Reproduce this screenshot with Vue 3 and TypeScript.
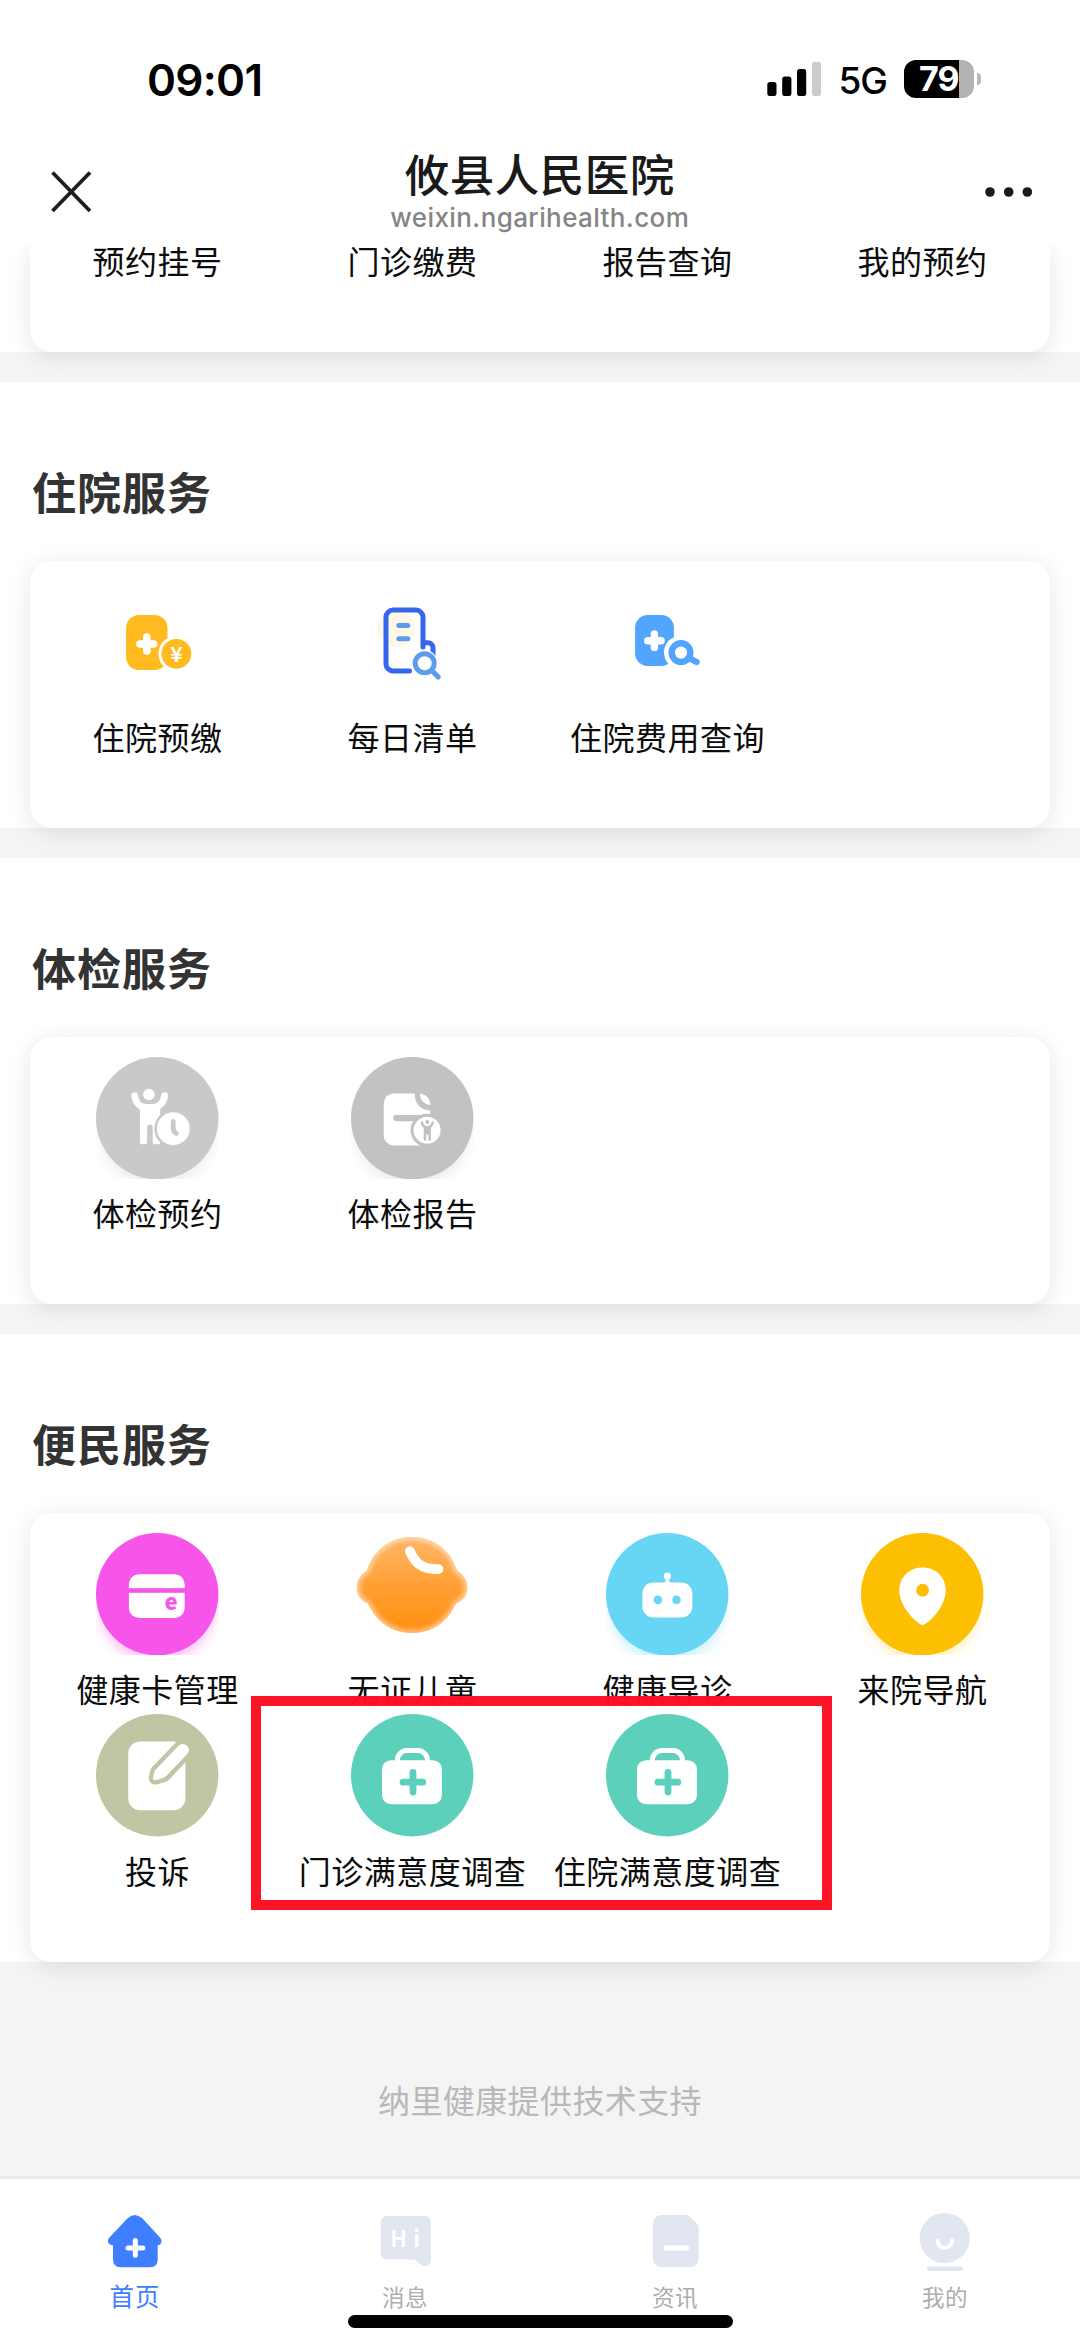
<script setup lang="ts">
interface Service {
  label: string
  icon: string
  disc?: string
  glow?: string
}
interface Section {
  title: string
  items: Service[]
}
interface Tab {
  label: string
  icon: string
  active?: boolean
}

const topLinks: string[] = ['预约挂号', '门诊缴费', '报告查询', '我的预约']

const sections: Section[] = [
  {
    title: '住院服务',
    items: [
      { label: '住院预缴', icon: 'prepay' },
      { label: '每日清单', icon: 'daily' },
      { label: '住院费用查询', icon: 'fee' },
    ],
  },
  {
    title: '体检服务',
    items: [
      { label: '体检预约', icon: 'exam', disc: '#c9c9c9', glow: '#eeeeee' },
      { label: '体检报告', icon: 'report', disc: '#c2c2c2', glow: '#eeeeee' },
    ],
  },
  {
    title: '便民服务',
    items: [
      { label: '健康卡管理', icon: 'card', disc: '#f755ea', glow: '#fbc4f6' },
      { label: '无证儿童', icon: 'child' },
      { label: '健康导诊', icon: 'robot', disc: '#67d6f5', glow: '#cdf2fd' },
      { label: '来院导航', icon: 'pin', disc: '#fdbf02', glow: '#fff1c2' },
      { label: '投诉', icon: 'complain', disc: '#bfc6a3' },
      { label: '门诊满意度调查', icon: 'kit', disc: '#5dd0bc' },
      { label: '住院满意度调查', icon: 'kit', disc: '#5dd0bc' },
    ],
  },
]

const tabs: Tab[] = [
  { label: '首页', icon: 'home', active: true },
  { label: '消息', icon: 'message' },
  { label: '资讯', icon: 'news' },
  { label: '我的', icon: 'mine' },
]
</script>

<template>
  <div class="screen">
    <header class="header">
      <div class="status">
        <span class="time">09:01</span>
        <div class="status-right">
          <svg class="signal" width="54" height="36" viewBox="0 0 54 36">
            <rect x="0.3" y="21" width="9.2" height="14" rx="2.8" />
            <rect x="15.2" y="15.5" width="9.2" height="19.5" rx="2.8" />
            <rect x="30" y="8" width="9.2" height="27" rx="2.8" />
            <rect x="45" y="0.7" width="9" height="34.3" rx="2.8" fill="#cccccc" />
          </svg>
          <span class="network">5G</span>
          <div class="battery"><span>79</span></div>
          <i class="battery-tip"></i>
        </div>
      </div>
      <div class="nav">
        <svg class="close" width="44" height="44" viewBox="0 0 44 44">
          <path d="M3.500 2.500 41 41M41 2.500 3.500 41" stroke="#1e1e1e" stroke-width="3.800" />
        </svg>
        <div class="titles">
          <h1>攸县人民医院</h1>
          <p>weixin.ngarihealth.com</p>
        </div>
        <svg class="more" width="48" height="12" viewBox="0 0 48 12">
          <circle cx="5" cy="6" r="4.8" fill="#1a1a1a" />
          <circle cx="23.7" cy="6" r="4.8" fill="#1a1a1a" />
          <circle cx="42.3" cy="6" r="4.8" fill="#1a1a1a" />
        </svg>
      </div>
    </header>

    <section class="section first">
      <div class="card">
        <div v-for="l in topLinks" :key="l" class="item"><span class="label">{{ l }}</span></div>
      </div>
    </section>

    <section v-for="s in sections" :key="s.title" class="section">
      <h2>{{ s.title }}</h2>
      <div class="card">
        <div v-for="it in s.items" :key="it.label" class="item">
          <svg class="icon" viewBox="0 0 122.5 122.5">
            <ellipse v-if="it.glow" class="glow" cx="61.2" cy="72" rx="58" ry="58" :fill="it.glow" />
            <ellipse v-if="it.disc" cx="61.2" cy="61.2" rx="61.2" ry="61.2" :fill="it.disc" />

            <g v-if="it.icon === 'prepay'">
              <rect x="30.1" y="34" width="41.4" height="55" rx="13" fill="#ffba20" />
              <path d="M50.8 56V70M44 63H57.6" stroke="#fff" stroke-width="7.6" stroke-linecap="round" />
              <circle cx="80.4" cy="72.8" r="18" fill="#fff" />
              <circle cx="80.4" cy="72.8" r="14.9" fill="#ffba20" />
              <text x="80.4" y="80.500" text-anchor="middle" class="yen">¥</text>
            </g>

            <g v-else-if="it.icon === 'daily'" fill="none" stroke-linecap="round">
              <circle cx="45" cy="47.5" r="19" fill="#fff7e6" />
              <path d="M58.5 89.9H42a7 7 0 0 1-7-7V36.1a7 7 0 0 1 7-7H65a7 7 0 0 1 7 7V66" stroke="#3566ee" stroke-width="5" />
              <path d="M73 61.8H77a5 5 0 0 1 5 5V75" stroke="#3566ee" stroke-width="5" />
              <path d="M47.8 44.4H56.8M47.8 57.7H56.8" stroke="#5b9ced" stroke-width="5" />
              <circle cx="73.7" cy="82.3" r="13.2" fill="#fff" />
              <circle cx="73.7" cy="82.3" r="9.5" stroke="#5b9ced" stroke-width="5" />
              <path d="M81 89.8 87.2 96" stroke="#5b9ced" stroke-width="5.2" />
            </g>

            <g v-else-if="it.icon === 'fee'">
              <rect x="29.1" y="34" width="38.8" height="51" rx="12.5" fill="#51a5ff" />
              <path d="M48.4 53V66.4M41.7 59.7H55.1" stroke="#fff" stroke-width="7.4" stroke-linecap="round" />
              <circle cx="75" cy="71.6" r="17" fill="#fff" />
              <circle cx="75" cy="71.6" r="9.3" fill="none" stroke="#51a5ff" stroke-width="6.4" />
              <path d="M84 77.5 90.6 81" stroke="#51a5ff" stroke-width="6.2" stroke-linecap="round" />
            </g>

            <g v-else-if="it.icon === 'exam'">
              <circle cx="52.9" cy="37.5" r="5.8" fill="#fff" />
              <path d="M38.7 38.6C39.5 45.5 44 50.5 50.5 50.5H56.5C63 50.5 68 45.5 68.6 38.6" fill="none" stroke="#fff" stroke-width="6.8" stroke-linecap="round" />
              <path d="M43.9 49.5H64.2V86Q64 87.3 62.6 87.3H58.4Q56.7 87.3 56.7 85.6V70.4a2.8 2.8 0 0 0-5.6 0V85.2Q51 87.3 49 87.3H46Q43.9 87.3 43.9 85.2Z" fill="#fff" />
              <circle cx="77.3" cy="71.7" r="19" fill="#c9c9c9" />
              <circle cx="77.3" cy="71.7" r="16.4" fill="#fff" />
              <path d="M77.2 64.5V71Q77.2 74.6 80.2 76.4" fill="none" stroke="#c9c9c9" stroke-width="4.8" stroke-linecap="round" />
            </g>

            <g v-else-if="it.icon === 'report'">
              <path d="M42.7 36.4H63.8C63.8 46 69 53 79.2 53.4V88.4H42.7a10 10 0 0 1-10-10V46.4a10 10 0 0 1 10-10Z" fill="#fff" />
              <path d="M68.9 36.6C75 37.5 79.2 41.5 79.2 47.9C73 47.4 69 43.5 68.9 36.6Z" fill="#fff" />
              <path d="M45.2 61.1H82" stroke="#c2c2c2" stroke-width="6.2" stroke-linecap="round" />
              <circle cx="76.1" cy="73.3" r="16.6" fill="#c2c2c2" />
              <circle cx="76.1" cy="73.3" r="13.5" fill="#fff" />
              <circle cx="76.3" cy="65" r="2.1" fill="#c2c2c2" />
              <path d="M71 65.5Q71.5 70.2 76.2 70.2Q81 70.2 81.7 65.5" fill="none" stroke="#c2c2c2" stroke-width="2.4" stroke-linecap="round" />
              <path d="M72.7 69.5H79.9V83.6H77.4V77.6H75.2V83.6H72.7Z" fill="#c2c2c2" />
            </g>

            <g v-else-if="it.icon === 'card'">
              <rect x="32.9" y="41.2" width="55.8" height="43.7" rx="10" fill="#fff" />
              <rect x="32" y="55.2" width="58" height="4.6" fill="#f755ea" />
              <text x="75" y="77" text-anchor="middle" class="e-mark">e</text>
            </g>

            <g v-else-if="it.icon === 'child'">
              <defs>
                <linearGradient id="faceFill" x1="0" y1="4" x2="0" y2="100" gradientUnits="userSpaceOnUse">
                  <stop offset="0" stop-color="#ffb668" />
                  <stop offset="0.45" stop-color="#ffa23a" />
                  <stop offset="1" stop-color="#ff8e0e" />
                </linearGradient>
                <clipPath id="faceClip">
                  <path d="M61 4C39 4 22.500 17 16 37.500C9.500 41.500 5.800 47.500 5.800 54.500C5.800 61.500 9.500 67.500 17 70.500C25.500 89 41 100 61 100C81 100 96.500 89 105 70.500C112.500 67.500 116.400 61.500 116.400 54.500C116.400 47.500 112.500 41.500 106 37.500C99.500 17 83 4 61 4Z" />
                </clipPath>
              </defs>
              <g clip-path="url(#faceClip)">
                <rect width="122" height="104" fill="url(#faceFill)" />
                <path class="rim" d="M61 4C39 4 22.500 17 16 37.500C9.500 41.500 5.800 47.500 5.800 54.500C5.800 61.500 9.500 67.500 17 70.500C25.500 89 41 100 61 100C81 100 96.500 89 105 70.500C112.500 67.500 116.400 61.500 116.400 54.500C116.400 47.500 112.500 41.500 106 37.500C99.500 17 83 4 61 4Z" />
              </g>
              <path d="M58.900 18.200C64 30 71 36.600 87.500 36.200" fill="none" stroke="#fff" stroke-width="9.800" stroke-linecap="round" />
            </g>

            <g v-else-if="it.icon === 'robot'">
              <rect x="36.4" y="49.5" width="49.9" height="35" rx="11" fill="#fff" />
              <circle cx="61.3" cy="43" r="3.6" fill="#fff" />
              <path d="M61.3 44V51" stroke="#fff" stroke-width="3.8" />
              <circle cx="51.9" cy="66.9" r="4.3" fill="#67d6f5" />
              <circle cx="70.5" cy="66.9" r="4.3" fill="#67d6f5" />
            </g>

            <g v-else-if="it.icon === 'pin'">
              <path d="M61.500 34.500C48 34.500 38.300 44.500 38.300 57.300C38.300 71 50 85.500 59.200 91.200Q61.500 92.600 63.800 91.200C73 85.500 84.700 71 84.700 57.300C84.700 44.500 75 34.500 61.500 34.500Z" fill="#fff" />
              <circle cx="61.6" cy="57.2" r="6.4" fill="#fdbf02" />
            </g>

            <g v-else-if="it.icon === 'complain'">
              <rect x="32.2" y="27.5" width="57.2" height="68.7" rx="12" fill="#fff" />
              <path d="M61.300 54.500 82.800 32.300Q86.500 28.500 90.600 32Q94.300 35.800 91 39.800L70.500 61.500Q69 63 67 63.700L60 65.700Q57.300 66.300 57.700 63.500L59 57.500Q59.500 55.800 61.300 54.500Z" fill="none" stroke="#bfc6a3" stroke-width="9.600" stroke-linejoin="round" />
              <path d="M60.800 54.500 82.800 31.600Q86.500 28.300 90.800 31.500Q95 35.800 91.300 40L70.500 61.800Q69 63.400 67 64L60 66.200Q56.500 67 57 63.500L58.500 57.500Q59 55.800 60.800 54.500Z" fill="#fff" />
            </g>

            <g v-else-if="it.icon === 'kit'">
              <rect x="31" y="46.2" width="59.9" height="44" rx="9" fill="#fff" />
              <path d="M46.300 48V46.500A9.500 9.900 0 0 1 55.800 36.600H67A9.500 9.900 0 0 1 76.500 46.500V48" fill="none" stroke="#fff" stroke-width="5" />
              <path d="M62 58.300V78.100M52 68.200H71.800" stroke="#5dd0bc" stroke-width="6.800" stroke-linecap="round" />
            </g>
          </svg>
          <span class="label">{{ it.label }}</span>
        </div>
        <div v-if="s.title === '便民服务'" class="highlight"></div>
      </div>
    </section>

    <footer class="support">纳里健康提供技术支持</footer>

    <nav class="tabbar">
      <div v-for="t in tabs" :key="t.label" class="tab" :class="{ active: t.active }">
        <svg width="60" height="60" viewBox="0 0 60 60">
          <g v-if="t.icon === 'home'">
            <path d="M22.300 6.500Q29.700 -0.500 37.500 6.500L55 25.500Q57.500 29 56 31.200Q55 33.200 52.700 33.200V47.500Q52.700 55.300 45 55.300H15.700Q8 55.300 8 47.500V33.200Q5 33.200 3.700 31.200Q1.800 28.500 4.500 25.500Z" fill="#3e7eff" />
            <path d="M30.300 28.600V43.200M23 36H37.800" stroke="#fff" stroke-width="5" stroke-linecap="round" />
          </g>
          <g v-else-if="t.icon === 'message'">
            <path d="M11.900 4H49.800a6 6 0 0 1 6 6V48Q55.800 53 51 54Q48 54.600 45 52L40.500 48.300Q39.300 47.400 38 47.400H11.900a6 6 0 0 1-6-6V10a6 6 0 0 1 6-6Z" fill="#e1e6f0" />
            <text x="15.300" y="34.500" class="hi">H</text>
            <text x="38.300" y="34.500" class="hi">i</text>
          </g>
          <g v-else-if="t.icon === 'news'">
            <path d="M16.500 3H41.500Q43.200 3 44.500 4.400L52.600 12.600Q53.700 13.800 53.700 15.500V46.800A8.500 8.500 0 0 1 45.200 55.300H16.500A8.500 8.500 0 0 1 8 46.800V11.500A8.500 8.500 0 0 1 16.500 3Z" fill="#e1e6f0" />
            <path d="M20.800 36.100H41.700" stroke="#fff" stroke-width="5" stroke-linecap="round" />
          </g>
          <g v-else>
            <circle cx="29.700" cy="26" r="25.100" fill="#e1e6f0" />
            <path d="M22.600 28.400A7.200 7.400 0 0 0 37 28.400" fill="none" stroke="#fff" stroke-width="4" stroke-linecap="round" />
            <path d="M14 56.800H45.700" stroke="#e1e6f0" stroke-width="4.600" stroke-linecap="round" />
          </g>
        </svg>
        <span>{{ t.label }}</span>
      </div>
      <div class="home-indicator"></div>
    </nav>
  </div>
</template>

<style>
body {
  margin: 0;
  background: #f4f4f4;
}
</style>

<style scoped>
.screen {
  width: 1080px;
  height: 2347px;
  overflow: hidden;
  display: flex;
  flex-direction: column;
  background: #f4f4f4;
  font-family: 'Noto Sans CJK SC', sans-serif;
}
h1, h2, p {
  margin: 0;
}
.header {
  position: relative;
  z-index: 2;
  flex: none;
  height: 246px;
  background: #fff;
}
.status {
  height: 138px;
  box-sizing: border-box;
  padding: 56px 99px 0 147px;
  display: flex;
  justify-content: space-between;
  align-items: flex-start;
  font-family: Inter, sans-serif;
}
.time {
  font-size: 44px;
  line-height: 48px;
  font-weight: 600;
  letter-spacing: -0.700px;
  color: #000;
}
.status-right {
  display: flex;
  align-items: center;
  height: 46px;
}
.network {
  margin-left: 18px;
  width: 65.500px;
  font-size: 37px;
  line-height: 46px;
  font-weight: 500;
  letter-spacing: -1px;
  padding-top: 4px;
}
.battery {
  width: 70px;
  height: 37.500px;
  border-radius: 12px;
  background: linear-gradient(90deg, #000 55px, #b2b2b2 55px);
  color: #fff;
  font-size: 34px;
  line-height: 38px;
  font-weight: 700;
  letter-spacing: -1px;
}
.battery span {
  margin-left: 15px;
}
.battery-tip {
  width: 4.500px;
  height: 12px;
  margin-left: 2.500px;
  border-radius: 0 5px 5px 0;
  background: #b8b8b8;
}
.nav {
  height: 108px;
  display: flex;
  align-items: center;
  justify-content: space-between;
  padding: 0 47px 0 49px;
}
.titles {
  padding: 0.500px 0 0 1.500px;
  text-align: center;
}
h1 {
  font-size: 44.500px;
  line-height: 48px;
  font-weight: 500;
  letter-spacing: 0.500px;
  color: #1a1a1a;
}
.titles p {
  margin-top: 4px;
  font-family: Inter, sans-serif;
  font-size: 26px;
  font-weight: 500;
  line-height: 34px;
  letter-spacing: 0.400px;
  color: #858585;
}
.section {
  flex: none;
  background: #fff;
  margin-bottom: 29.700px;
  padding: 0 30px;
}
.section:last-of-type {
  margin-bottom: 0;
}
h2 {
  padding-top: 75.500px;
  height: 103.400px;
  margin-left: 2px;
  font-size: 44px;
  line-height: 68px;
  font-weight: 700;
  letter-spacing: 1px;
  color: #333;
}
.card {
  display: grid;
  grid-template-columns: repeat(4, 255px);
  padding: 20px 0 66px;
  background: #fff;
  border-radius: 22px;
  box-shadow: 0 4px 24px rgba(0, 0, 0, 0.1);
}
.item {
  height: 181.500px;
  display: flex;
  flex-direction: column;
  align-items: center;
}
.first .card {
  height: 106px;
  padding: 0;
  border-radius: 0 0 22px 22px;
}
.first .item {
  height: 32px;
}
.first .label {
  margin: 0;
  line-height: 28px;
}
.icon {
  display: block;
  flex: none;
  width: 122.500px;
  height: 122.500px;
  overflow: hidden;
}
.glow {
  filter: blur(6px);
}
.rim {
  fill: none;
  stroke: #fff;
  stroke-width: 5px;
  opacity: 0.6;
  filter: blur(2.5px);
}
.label {
  margin-top: 10px;
  font-size: 32px;
  line-height: 46px;
  letter-spacing: 0.500px;
  white-space: nowrap;
  color: #0c0c0c;
}
.yen {
  font: 700 21px 'Noto Sans CJK SC', sans-serif;
  fill: #fff;
}
.e-mark {
  font: 900 22px 'Noto Sans CJK SC', sans-serif;
  fill: #f755ea;
}
.hi {
  font: 700 22px 'Noto Sans CJK SC', sans-serif;
  fill: #fff;
}
/* Callout frame drawn over the grid, crossing the card's rows. */
.highlight {
  position: absolute;
  left: 251px;
  top: 1695.500px;
  width: 580.500px;
  height: 214.500px;
  box-sizing: border-box;
  border: 10.600px solid rgba(255, 14, 34, 0.98);
}
.support {
  flex: 1;
  text-align: center;
  padding-top: 114px;
  font-size: 32px;
  line-height: 46px;
  letter-spacing: 0.400px;
  color: #b8b8b8;
}
.tabbar {
  position: relative;
  flex: none;
  height: 168px;
  display: flex;
  background: #fff;
  border-top: 3px solid #ebebeb;
}
.tab {
  width: 270px;
  padding-top: 33px;
  display: flex;
  flex-direction: column;
  align-items: center;
  font-size: 22.500px;
  line-height: 32px;
  letter-spacing: 0.500px;
  color: #adadad;
}
.tab span {
  margin-top: 8px;
}
.tab.active {
  font-size: 24.500px;
  letter-spacing: 1px;
  color: #3e7eff;
}
.home-indicator {
  position: absolute;
  left: 347.500px;
  top: 136px;
  width: 385.500px;
  height: 12.500px;
  border-radius: 7px;
  background: #000;
}
</style>
